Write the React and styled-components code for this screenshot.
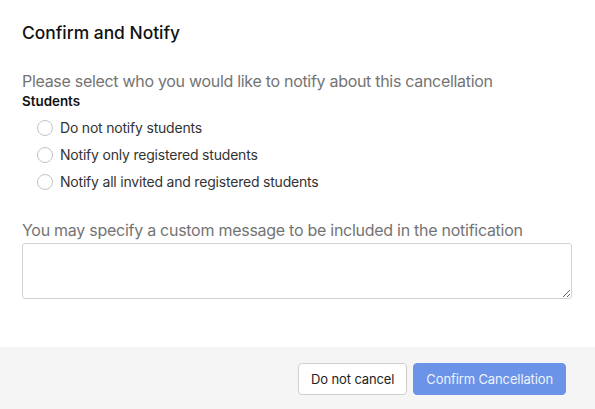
import React from 'react';
import styled, { createGlobalStyle } from 'styled-components';

const GlobalStyle = createGlobalStyle`
  html, body {
    margin: 0;
    padding: 0;
    background: #fff;
  }
  body {
    font-family: 'Inter', 'Noto Sans', sans-serif;
  }
`;

const Dialog = styled.div`
  width: 595px;
  height: 409px;
  display: flex;
  flex-direction: column;
  background: #fff;
`;

const Body = styled.div`
  flex: 1;
  padding: 22px 23px 0 22px;
`;

const Title = styled.h2`
  margin: 0;
  font-size: 17.4px;
  font-weight: 500;
  line-height: 22px;
  color: #111;
`;

const Prompt = styled.p`
  margin: 26px 0 0;
  font-size: 16px;
  line-height: 22px;
  letter-spacing: -0.3px;
  color: #747474;
`;

const GroupLabel = styled.div`
  font-size: 13.4px;
  font-weight: 600;
  line-height: 18px;
  color: #111;
`;

const Options = styled.div`
  display: flex;
  flex-direction: column;
  padding: 4px 0 0 15px;
`;

const Option = styled.label`
  display: flex;
  align-items: center;
  gap: 7px;
  height: 27px;
  font-size: 14px;
  letter-spacing: -0.2px;
  color: #333;
`;

const Radio = styled.span`
  width: 16px;
  height: 16px;
  border-radius: 50%;
  border: 1px solid #c4c4c4;
  background: #fff;
  box-sizing: border-box;
`;

const MessageLabel = styled.p`
  margin: 25px 0 3px;
  font-size: 16px;
  line-height: 20px;
  letter-spacing: -0.27px;
  color: #747474;
`;

const TextArea = styled.textarea`
  display: block;
  width: 100%;
  height: 56px;
  box-sizing: border-box;
  border: 1px solid #d2d2d2;
  border-radius: 3px;
  font-family: inherit;
  font-size: 14px;
  resize: vertical;
  outline: none;
`;

const Footer = styled.div`
  height: 62px;
  background: #f5f5f5;
  display: flex;
  justify-content: flex-end;
  align-items: flex-start;
  gap: 6px;
  padding: 16px 29px 0 0;
  box-sizing: border-box;
`;

const Button = styled.button`
  height: 32px;
  padding: 0 12px;
  border-radius: 4px;
  font-family: inherit;
  font-size: 13px;
  letter-spacing: -0.12px;
  cursor: pointer;
  border: 1px solid ${p => (p.$primary ? '#6b93e8' : '#cfcfcf')};
  background: ${p => (p.$primary ? '#6b93e8' : '#fff')};
  color: ${p => (p.$primary ? '#eef2fc' : '#222')};
`;

const options = [
  'Do not notify students',
  'Notify only registered students',
  'Notify all invited and registered students',
];

export default function App() {
  return (
    <>
      <GlobalStyle />
      <Dialog>
        <Body>
          <Title>Confirm and Notify</Title>
          <Prompt>Please select who you would like to notify about this cancellation</Prompt>
          <GroupLabel>Students</GroupLabel>
          <Options>
            {options.map(o => (
              <Option key={o}>
                <Radio />
                {o}
              </Option>
            ))}
          </Options>
          <MessageLabel>You may specify a custom message to be included in the notification</MessageLabel>
          <TextArea />
        </Body>
        <Footer>
          <Button>Do not cancel</Button>
          <Button $primary>Confirm Cancellation</Button>
        </Footer>
      </Dialog>
    </>
  );
}
